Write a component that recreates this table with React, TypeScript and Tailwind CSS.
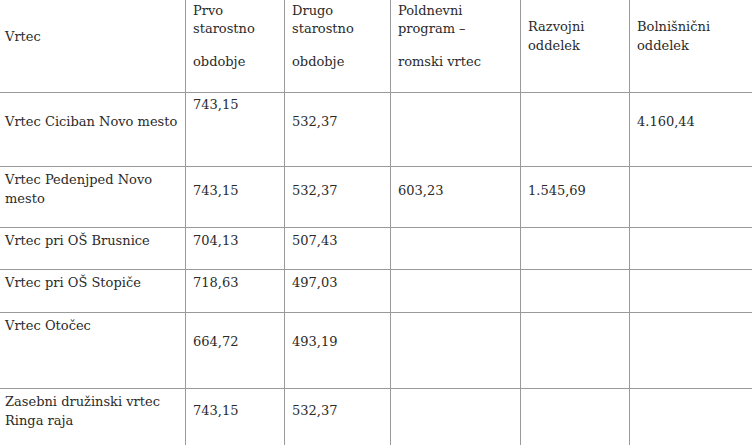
type Cell = { lines?: string[]; after?: string; pt: string; first?: boolean };

const rows: Cell[][] = [
  [
    { lines: ['Vrtec'], pt: 'pt-[28px]', first: true },
    { lines: ['Prvo', 'starostno'], after: 'obdobje', pt: 'pt-[1.5px]' },
    { lines: ['Drugo', 'starostno'], after: 'obdobje', pt: 'pt-[1.5px]' },
    { lines: ['Poldnevni', 'program –'], after: 'romski vrtec', pt: 'pt-[1.5px]' },
    { lines: ['Razvojni', 'oddelek'], pt: 'pt-[18px]' },
    { lines: ['Bolnišnični', 'oddelek'], pt: 'pt-[18px]' },
  ],
  [
    { lines: ['Vrtec Ciciban Novo mesto'], pt: 'pt-[19.5px]', first: true },
    { lines: ['743,15'], pt: 'pt-[3px]' },
    { lines: ['532,37'], pt: 'pt-[19.5px]' },
    { pt: 'pt-1' },
    { pt: 'pt-1' },
    { lines: ['4.160,44'], pt: 'pt-[19.5px]' },
  ],
  [
    { lines: ['Vrtec Pedenjped Novo', 'mesto'], pt: 'pt-1', first: true },
    { lines: ['743,15'], pt: 'pt-[15px]' },
    { lines: ['532,37'], pt: 'pt-[15px]' },
    { lines: ['603,23'], pt: 'pt-[15px]' },
    { lines: ['1.545,69'], pt: 'pt-[15px]' },
    { pt: 'pt-1' },
  ],
  [
    { lines: ['Vrtec pri OŠ Brusnice'], pt: 'pt-1', first: true },
    { lines: ['704,13'], pt: 'pt-1' },
    { lines: ['507,43'], pt: 'pt-1' },
    { pt: 'pt-1' },
    { pt: 'pt-1' },
    { pt: 'pt-1' },
  ],
  [
    { lines: ['Vrtec pri OŠ Stopiče'], pt: 'pt-1', first: true },
    { lines: ['718,63'], pt: 'pt-1' },
    { lines: ['497,03'], pt: 'pt-1' },
    { pt: 'pt-1' },
    { pt: 'pt-1' },
    { pt: 'pt-1' },
  ],
  [
    { lines: ['Vrtec Otočec'], pt: 'pt-1', first: true },
    { lines: ['664,72'], pt: 'pt-[20px]' },
    { lines: ['493,19'], pt: 'pt-[20px]' },
    { pt: 'pt-1' },
    { pt: 'pt-1' },
    { pt: 'pt-1' },
  ],
  [
    { lines: ['Zasebni družinski vrtec', 'Ringa raja'], pt: 'pt-1', first: true },
    { lines: ['743,15'], pt: 'pt-[12.5px]' },
    { lines: ['532,37'], pt: 'pt-[12.5px]' },
    { pt: 'pt-1' },
    { pt: 'pt-1' },
    { pt: 'pt-1' },
  ],
];

const TableCell = ({ cell, last }: { cell: Cell; last: boolean }) => (
  <div
    className={`border-b border-[#9a9a9a] ${last ? '' : 'border-r'} ${cell.first ? 'pl-[5px]' : 'pl-[7px]'} ${cell.pt} pr-1 whitespace-nowrap`}
  >
    {cell.lines?.map((line) => (
      <div key={line}>{line}</div>
    ))}
    {cell.after && <div className="mt-[14.5px]">{cell.after}</div>}
  </div>
);

export default function App() {
  return (
    <div className="w-[752px] h-[445px] overflow-hidden bg-white">
      <div
        className="grid grid-cols-[186px_99px_106px_130px_109px_1fr] grid-rows-[93px_74px_61px_42px_43px_76px_60px] text-[13px] leading-[18.5px] text-[#2a2a2a]"
        style={{ fontFamily: '"DejaVu Serif", serif' }}
      >
        {rows.map((row, r) =>
          row.map((cell, c) => <TableCell key={`${r}-${c}`} cell={cell} last={c === row.length - 1} />)
        )}
      </div>
    </div>
  );
}
